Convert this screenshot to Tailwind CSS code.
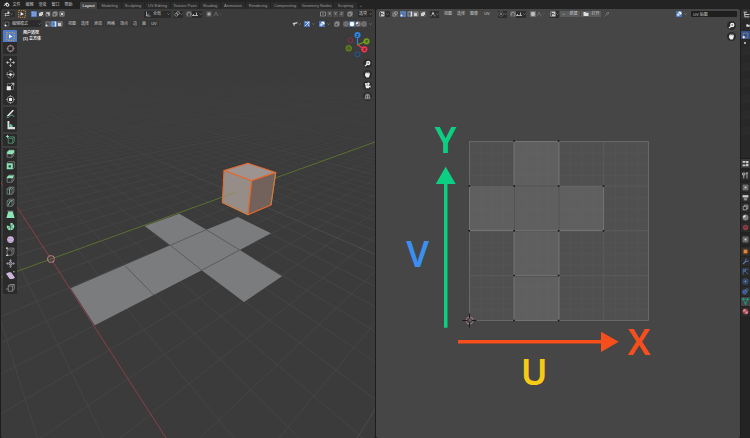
<!DOCTYPE html>
<html lang="zh-CN">
<head>
  <meta charset="utf-8">
  <title>UV Editor</title>
  <script src="https://cdn.jsdelivr.net/npm/@tailwindcss/browser@4"></script>
</head>
<body class="h-screen overflow-hidden flex flex-col bg-[#1d1d1d] text-[#c8c8c8] text-[4px] leading-none font-['Liberation_Sans','Noto_Sans_CJK_SC',sans-serif]">

  <!-- icon set -->
  <svg class="hidden">
    <defs>
      <symbol id="chev" viewBox="0 0 12 12"><path d="M2 4l4 4 4-4" fill="none" stroke="#aaa" stroke-width="2"/></symbol>
      <symbol id="logo" viewBox="0 0 18 12"><path d="M1 8.500l7-5H4V2h5.500L8.500.5l1.500-.4 5 4.200c3 2.800 2 7.200-3 7.200-3.500 0-5.200-2-5.200-4L4 9.500z" fill="#ddd"/><circle cx="11.500" cy="7" r="2" fill="#232323"/></symbol>
      <symbol id="editor" viewBox="0 0 12 12"><path d="M1 9h10M3 11V5M1 5h10M8 1v6" stroke="#bbb" stroke-width="1.500" fill="none"/><circle cx="9" cy="3" r="2" fill="#ddd"/></symbol>
      <symbol id="select" viewBox="0 0 12 12"><rect x="1" y="1" width="10" height="10" fill="none" stroke="#e8a33d" stroke-width="1.200" stroke-dasharray="2 1.300"/><path d="M4 3l5 3.500-3 .6L4 9z" fill="#fff"/></symbol>
      <symbol id="m1" viewBox="0 0 12 12"><rect x="2" y="2" width="8" height="8" fill="#6f93d8" stroke="#b9cdf3" stroke-dasharray="1.500 1"/></symbol>
      <symbol id="m2" viewBox="0 0 12 12"><path d="M2 4h3V2h5v6H8v2H2z" fill="#ccc"/></symbol>
      <symbol id="m3" viewBox="0 0 12 12"><path d="M2.500 2.500h7v7h-3v-4h-4z" fill="#ccc"/><path d="M2 6v4h4" fill="none" stroke="#999"/></symbol>
      <symbol id="m4" viewBox="0 0 12 12"><path d="M2 4h6v6H2zM4 4V2h6v6H8" fill="none" stroke="#bbb" stroke-width="1.200"/></symbol>
      <symbol id="m5" viewBox="0 0 12 12"><path d="M2 2h8v8H2z" fill="none" stroke="#aaa" stroke-width="1.200"/><path d="M4 4h4v4H4z" fill="#ccc"/></symbol>
      <symbol id="cursor" viewBox="0 0 12 12"><circle cx="6" cy="6" r="4" fill="none" stroke="#ccc" stroke-width="1"/><circle cx="6" cy="6" r="4" fill="none" stroke="#b0484e" stroke-width="1" stroke-dasharray="2 2"/><path d="M6 .5V4M6 8v3.500M.5 6H4M8 6h3.500" stroke="#888" stroke-width=".8"/></symbol>
      <symbol id="move" viewBox="0 0 12 12"><path d="M6 0l2 2.500H4zM6 12l2-2.500H4zM0 6l2.500-2v4zM12 6L9.500 4v4z" fill="#ccc"/><path d="M6 2v2.500M6 7.500V10M2 6h2.500M7.500 6H10" stroke="#ccc"/></symbol>
      <symbol id="rotate" viewBox="0 0 12 12"><circle cx="6" cy="6" r="4.700" fill="none" stroke="#aaa" stroke-width="1" stroke-dasharray="5 1.500"/><path d="M6 3.500L8.500 6 6 8.500 3.500 6z" fill="#ddd"/><path d="M1 6h3M8 6h3" stroke="#aaa"/></symbol>
      <symbol id="scale" viewBox="0 0 12 12"><path d="M2 2h8v8H2z" fill="none" stroke="#777"/><path d="M1 5.500h5.500V11H1z" fill="#eee"/><path d="M7 5l3-3M7.500 1.500h3v3" stroke="#ccc" fill="none"/></symbol>
      <symbol id="transform" viewBox="0 0 12 12"><circle cx="6" cy="6" r="4.500" fill="none" stroke="#999"/><path d="M4 4h4v4H4z" fill="#eee"/><path d="M6 0v3M6 9v3M0 6h3M9 6h3" stroke="#aaa"/></symbol>
      <symbol id="annotate" viewBox="0 0 12 12"><path d="M1.500 8.500L9 1l1.500 1L4 9l-3 1z" fill="#eee"/><path d="M1 11c4 1 4-3 7-3 2 0 1 2 3 2" fill="none" stroke="#5fb98a" stroke-width="1.200"/></symbol>
      <symbol id="measure" viewBox="0 0 12 12"><path d="M2 0h2.500v8H12v3H2z" fill="#ddd"/><path d="M5 4c3 0 4 2 4 4H5z" fill="#5fc797"/></symbol>
      <symbol id="cube" viewBox="0 0 12 12"><path d="M1.500 4h6.500v7H1.500zM1.500 4l2.500-2.500h6.500L8 4M10.500 1.500v6.500L8 11" fill="none" stroke="#888" stroke-width="1"/></symbol>
      <symbol id="addcube" viewBox="0 0 12 12"><path d="M3 4.500h6V11H3zM3 4.500l2-2h6l-2 2M11 2.500v6L9 11" fill="none" stroke="#559b79"/><path d="M0 2h4M2 0v4" stroke="#8fe0b8" stroke-width="1.200"/></symbol>
      <symbol id="extrude" viewBox="0 0 12 12"><use href="#cube"/><path d="M1.500 4.500L4 1.500h7v3L8.500 7h-7z" fill="#8ce3b6"/></symbol>
      <symbol id="inset" viewBox="0 0 12 12"><path d="M1 3h8v8H1z" fill="#8ce3b6"/><path d="M3.500 5.500h3v3h-3z" fill="#2c3a33"/><path d="M1 3l2-2h8v8l-2 2" fill="none" stroke="#888"/></symbol>
      <symbol id="bevel" viewBox="0 0 12 12"><use href="#cube"/><path d="M1 5L3.500 2h7L9 5.500H1z" fill="#8ce3b6"/></symbol>
      <symbol id="loop" viewBox="0 0 12 12"><use href="#cube"/><path d="M4.800 11V4L7 1.500" fill="none" stroke="#6ccb9c" stroke-width="1.200"/></symbol>
      <symbol id="knife" viewBox="0 0 12 12"><use href="#cube"/><path d="M3 10l2-5 3-2" fill="none" stroke="#6ccb9c" stroke-width="1.200"/></symbol>
      <symbol id="poly" viewBox="0 0 12 12"><path d="M3 2h6l2.500 8.500H.5z" fill="#8ce3b6"/><path d="M2 1.500h8" stroke="#ccc" stroke-dasharray="1.500 1"/></symbol>
      <symbol id="spin" viewBox="0 0 12 12"><path d="M6 6V1A5 5 0 1 1 1.300 4.500z" fill="#8ce3b6"/><path d="M6 6l4-3M6 6l4 3M6 6v5M6 6l-4 2.500" stroke="#2c3a33" stroke-width=".7"/></symbol>
      <symbol id="smooth" viewBox="0 0 12 12"><circle cx="6" cy="6" r="4.500" fill="#cdb5dc"/><path d="M1.500 7.500c3 1.500 6 1.500 9 0M1.500 4.500c3 1.200 6 1.200 9 0" stroke="#8d789b" fill="none" stroke-width=".6"/></symbol>
      <symbol id="slide" viewBox="0 0 12 12"><use href="#cube"/><path d="M0 1.500h2.500M0 11h3" stroke="#eee" stroke-width="1.500"/></symbol>
      <symbol id="shrink" viewBox="0 0 12 12"><path d="M6 0l2 2.500H4zM6 12l2-2.500H4zM0 6l2.500-2v4zM12 6L9.500 4v4z" fill="#999"/><path d="M6 3l3 3-3 3-3-3z" fill="#75697d" stroke="#d0bfdb"/></symbol>
      <symbol id="shear" viewBox="0 0 12 12"><path d="M0 3.500C3 2 5 1.500 7 2l5 7c-3 2-5 2-7 1.500z" fill="#cdb5dc"/><path d="M9.500 1h2" stroke="#eee"/></symbol>
      <symbol id="rip" viewBox="0 0 12 12"><path d="M3 4h5.500v7H3zM3 4l2-2h6L8.500 4M11 2v6l-2.500 3M0 8h3" fill="none" stroke="#999"/></symbol>
      <symbol id="magnet" viewBox="0 0 12 12"><path d="M3 9A4 4 0 1 1 9 9" fill="none" stroke="#999" stroke-width="2"/></symbol>
      <symbol id="snapto" viewBox="0 0 12 12"><path d="M0 9h12M3 9V6M9 9V3" stroke="#ccc" stroke-width="1.600"/></symbol>
      <symbol id="dot" viewBox="0 0 12 12"><circle cx="6" cy="6" r="4" fill="#888"/><circle cx="6" cy="6" r="1.500" fill="#ccc"/></symbol>
      <symbol id="disc" viewBox="0 0 12 12"><circle cx="6" cy="6" r="4.500" fill="#bbb"/></symbol>
      <symbol id="curve" viewBox="0 0 12 12"><path d="M1 10c4 0 3-8 5-8s1 8 5 8" fill="none" stroke="#888" stroke-width="1.200"/></symbol>
      <symbol id="axes" viewBox="0 0 12 12"><path d="M3 1v9h8M3 10l5-5" fill="none" stroke="#ccc" stroke-width="1.300"/></symbol>
      <symbol id="link" viewBox="0 0 12 12"><circle cx="4.500" cy="7.500" r="3" fill="none" stroke="#aaa" stroke-width="1.300"/><circle cx="8" cy="4" r="3" fill="none" stroke="#aaa" stroke-width="1.300"/></symbol>
      <symbol id="mirror" viewBox="0 0 12 12"><path d="M4 2H1v8h3M8 2h3v8H8M6 0v12" fill="none" stroke="#aaa" stroke-width="1.300"/></symbol>
      <symbol id="vert" viewBox="0 0 12 12"><path d="M2 2h8v8H2z" fill="none" stroke="#999"/><circle cx="3" cy="9" r="2" fill="#eee"/></symbol>
      <symbol id="edge" viewBox="0 0 12 12"><path d="M2 2h8v8H2z" fill="none" stroke="#a9c0ee"/><path d="M8.500 1v10" stroke="#fff" stroke-width="2"/></symbol>
      <symbol id="face" viewBox="0 0 12 12"><path d="M2 2h8v8H2z" fill="none" stroke="#aaa"/><path d="M2 4h6v6H2z" fill="#ccc"/></symbol>
      <symbol id="overlay" viewBox="0 0 12 12"><circle cx="7.500" cy="4.500" r="3.500" fill="#fff"/><circle cx="4.500" cy="7.500" r="3.500" fill="#c3d4f5" stroke="#4772b3"/></symbol>
      <symbol id="gizmo" viewBox="0 0 12 12"><path d="M2 2c5 1 7 4 8 8M2 10l8-8M7 2h3v3" fill="none" stroke="#fff" stroke-width="1.300"/></symbol>
      <symbol id="eye" viewBox="0 0 12 12"><path d="M1 5q3-3 7-2l3-2-1 4-4 1-2 5-1-4z" fill="#ccc"/></symbol>
      <symbol id="sticky" viewBox="0 0 12 12"><path d="M6 1l3 6H3z" fill="#ccc"/><path d="M1 9.500h3M8 9.500h3" stroke="#aaa" stroke-width="1.500"/></symbol>
      <symbol id="pivot" viewBox="0 0 12 12"><circle cx="6" cy="6" r="4.700" fill="none" stroke="#aaa" stroke-dasharray="3 1.500"/><circle cx="6" cy="6" r="1.500" fill="#ddd"/></symbol>
      <symbol id="sphere" viewBox="0 0 12 12"><circle cx="6" cy="6" r="4.500" fill="none" stroke="#aaa"/><path d="M6 1.500v9M1.500 6h9" stroke="#aaa" stroke-width=".8"/></symbol>
      <symbol id="solid" viewBox="0 0 12 12"><circle cx="6" cy="6" r="4.500" fill="#fff"/></symbol>
      <symbol id="shade" viewBox="0 0 12 12"><circle cx="6" cy="6" r="4.500" fill="#777" stroke="#aaa"/><path d="M6 1.500A4.500 4.500 0 0 0 1.500 6H6z" fill="#ddd"/></symbol>
      <symbol id="image" viewBox="0 0 12 12"><path d="M1 1h10v10H1z" fill="#ccc"/><path d="M3 2v8M3 8l3-4 3 4" stroke="#333" fill="none" stroke-width="1.500"/></symbol>
      <symbol id="folder" viewBox="0 0 12 12"><path d="M1 2h4l1 1.500h5V10H1z" fill="#ddd"/></symbol>
      <symbol id="pin" viewBox="0 0 12 12"><path d="M1 11l4-4M4 4l4 4M5 5l3-3 2 2-3 3" fill="none" stroke="#888" stroke-width="1.300"/></symbol>
      <symbol id="zoomi" viewBox="0 0 12 12"><circle cx="6" cy="6" r="6" fill="#2b2b2b"/><circle cx="7" cy="5.300" r="2.900" fill="#eee"/><path d="M2.500 9.500l3-2.500" stroke="#eee" stroke-width="1.600"/><path d="M5.700 5.300h2.600M7 4v2.600" stroke="#444" stroke-width=".6"/></symbol>
      <symbol id="hand" viewBox="0 0 12 12"><circle cx="6" cy="6" r="6" fill="#2b2b2b"/><path d="M3 5l1-2 .5 2L5 2l1 2.500L7 2l.5 3L9 3v4l-1.500 3h-3L2.500 7z" fill="#eee"/></symbol>
      <symbol id="camera" viewBox="0 0 12 12"><circle cx="6" cy="6" r="6" fill="#2b2b2b"/><circle cx="4" cy="4" r="1.500" fill="#eee"/><circle cx="7.200" cy="3.800" r="1.700" fill="#eee"/><path d="M3 5.500h5v1l2-1v3.500l-2-1v1.500H4z" fill="#eee"/></symbol>
      <symbol id="persp" viewBox="0 0 12 12"><circle cx="6" cy="6" r="6" fill="#2b2b2b"/><path d="M4 3h4l1.500 6h-7zM3.500 5h5M3 7h6M6 3v6" fill="none" stroke="#bbb" stroke-width=".8"/></symbol>
      <symbol id="wrench" viewBox="0 0 12 12"><path d="M2 10l5-5" stroke="#5e86c9" stroke-width="2"/><path d="M7 1L6.500 4.500 8 6l3.500-1" fill="none" stroke="#5e86c9" stroke-width="1.500"/></symbol>
      <symbol id="tree" viewBox="0 0 12 12"><path d="M1 2h6M3 2v8M3 6h8M3 10h8" fill="none" stroke="#ccc" stroke-width="1.600"/></symbol>
      <symbol id="props" viewBox="0 0 12 12"><path d="M1 1.500h5v3H1zM1 7.500h5v3H1zM7 1.500h4v4H7zM7 7h4v3.500H7z" fill="#ccc"/></symbol>
      <symbol id="tools" viewBox="0 0 12 12"><path d="M3 5v6M1 2h4v3H1zM8.500 1v10M6.500 2h4" stroke="#bbb" stroke-width="1.500" fill="none"/></symbol>
      <symbol id="printer" viewBox="0 0 12 12"><path d="M1 2h10v4H1z" fill="#ccc"/><path d="M3 7h6v4H3z" fill="#888"/></symbol>
    </defs>
  </svg>

  <!-- top bar -->
  <header class="h-[9px] shrink-0 bg-[#232323] flex items-center pl-[3px]">
    <svg class="w-[7px] h-[5px]"><use href="#logo"/></svg>
    <nav class="flex mr-px" aria-label="菜单">
      <button class="w-[13px] text-center">文件</button>
      <button class="w-[13px] text-center">编辑</button>
      <button class="w-[13px] text-center">渲染</button>
      <button class="w-[13px] text-center">窗口</button>
      <button class="w-[13px] text-center">帮助</button>
    </nav>
    <nav class="flex self-end items-center gap-px ml-[4px] text-[#9a9a9a] *:h-[7px] *:bg-[#2b2b2b] *:rounded-t-[1px]" aria-label="工作区">
      <button class="w-[17px] bg-[#424242]! text-white">Layout</button>
      <button class="w-[23px]">Modeling</button>
      <button class="w-[22px]">Sculpting</button>
      <button class="w-[25px]">UV Editing</button>
      <button class="w-[28px]">Texture Paint</button>
      <button class="w-[20px]">Shading</button>
      <button class="w-[24px]">Animation</button>
      <button class="w-[24px]">Rendering</button>
      <button class="w-[28px]">Compositing</button>
      <button class="w-[33px]">Geometry Nodes</button>
      <button class="w-[23px]">Scripting</button>
      <button class="w-[6px] bg-transparent!">+</button>
    </nav>
  </header>

  <main class="flex-1 min-h-0 flex gap-px pl-px">

    <!-- 3D viewport -->
    <section class="flex-[374] min-w-0 flex flex-col bg-[#3b3b3b] rounded-[2px] overflow-hidden">
      <div class="h-[10px] shrink-0 flex items-center px-[3px] [&_svg]:w-[6px] [&_svg]:h-[6px]">
        <button class="flex items-center w-[11px] bg-[#2e2e2e] rounded-[1px]" aria-label="编辑器类型"><svg><use href="#editor"/></svg><svg class="w-[3px]!"><use href="#chev"/></svg></button>
        <button class="ml-[3px]" aria-label="框选"><svg class="w-[8px]! h-[8px]!"><use href="#select"/></svg></button>
        <div class="ml-[5px] flex gap-px *:bg-[#4c4c4c]">
          <button class="bg-[#4772b3]!" aria-label="新建选区"><svg><use href="#m1"/></svg></button>
          <button aria-label="扩展"><svg><use href="#m2"/></svg></button>
          <button aria-label="减去"><svg><use href="#m3"/></svg></button>
          <button aria-label="反转"><svg><use href="#m4"/></svg></button>
          <button aria-label="相交"><svg><use href="#m5"/></svg></button>
        </div>
        <button class="ml-[79px] w-[27px] h-[7px] px-px flex items-center gap-[2px] bg-[#2b2b2b] rounded-[1px]"><svg><use href="#axes"/></svg>全局<svg class="w-[3px]! ml-auto"><use href="#chev"/></svg></button>
        <button class="ml-[3px] h-[7px] flex items-center bg-[#2b2b2b]" aria-label="轴心点"><svg><use href="#link"/></svg><svg class="w-[3px]!"><use href="#chev"/></svg></button>
        <button class="ml-[3px] bg-[#4c4c4c]" aria-label="吸附"><svg><use href="#magnet"/></svg></button>
        <button class="h-[7px] flex items-center gap-px bg-[#2b2b2b]" aria-label="吸附至"><svg><use href="#snapto"/></svg><svg class="w-[3px]!"><use href="#chev"/></svg></button>
        <button class="ml-[4px] bg-[#4c4c4c]" aria-label="衰减编辑"><svg><use href="#dot"/></svg></button>
        <button class="ml-px h-[7px] flex items-center" aria-label="衰减"><svg><use href="#curve"/></svg><svg class="w-[3px]! opacity-40"><use href="#chev"/></svg></button>
        <div class="ml-auto flex items-center gap-px text-center *:h-[6px]">
          <svg><use href="#mirror"/></svg>
          <button class="w-[5px] bg-[#4c4c4c]">X</button>
          <button class="w-[5px] bg-[#4c4c4c]">Y</button>
          <button class="w-[5px] bg-[#4c4c4c]">Z</button>
          <button class="ml-[2px] bg-[#4c4c4c]" aria-label="自动合并"><svg><use href="#m4"/></svg></button>
          <button class="ml-[4px] w-[14px] flex items-center justify-between pl-px bg-[#2b2b2b]">选项<svg class="w-[3px]!"><use href="#chev"/></svg></button>
        </div>
      </div>
      <div class="h-[9px] shrink-0 flex items-center px-[3px] [&_svg]:w-[6px] [&_svg]:h-[6px]">
        <button class="w-[37px] h-[7px] flex items-center gap-[2px] bg-[#2b2b2b] rounded-[1px]"><svg><use href="#vert"/></svg>编辑模式<svg class="w-[3px]! ml-auto"><use href="#chev"/></svg></button>
        <div class="ml-[4px] flex *:bg-[#4c4c4c] *:h-[6px]">
          <button aria-label="顶点选择"><svg><use href="#vert"/></svg></button>
          <button class="bg-[#4772b3]!" aria-label="边选择"><svg><use href="#edge"/></svg></button>
          <button aria-label="面选择"><svg><use href="#face"/></svg></button>
        </div>
        <nav class="ml-[3px] flex gap-px *:h-[7px] *:bg-[#363636] *:rounded-[1px]" aria-label="视图菜单">
          <button class="w-[12px]">视图</button>
          <button class="w-[12px]">选择</button>
          <button class="w-[12px]">添加</button>
          <button class="w-[12px]">网格</button>
          <button class="w-[12px]">顶点</button>
          <button class="w-[8px]">边</button>
          <button class="w-[8px]">面</button>
          <button class="w-[10px]">UV</button>
        </nav>
        <div class="ml-auto flex items-center *:h-[6px]">
          <button class="flex items-center mr-[3px]" aria-label="可见性"><svg><use href="#eye"/></svg><svg class="w-[3px]!"><use href="#chev"/></svg></button>
          <button class="bg-[#4772b3]" aria-label="Gizmo"><svg><use href="#gizmo"/></svg></button>
          <svg class="w-[3px]! ml-[2px] mr-[4px]"><use href="#chev"/></svg>
          <button class="bg-[#4772b3]" aria-label="叠加层"><svg><use href="#overlay"/></svg></button>
          <svg class="w-[3px]! ml-[2px] mr-[4px]"><use href="#chev"/></svg>
          <button class="bg-[#4c4c4c] mr-[3px]" aria-label="透视模式"><svg><use href="#m4"/></svg></button>
          <button class="bg-[#4c4c4c]" aria-label="线框"><svg><use href="#sphere"/></svg></button>
          <button class="bg-[#4772b3]" aria-label="实体"><svg><use href="#solid"/></svg></button>
          <button class="bg-[#4c4c4c]" aria-label="材质预览"><svg><use href="#shade"/></svg></button>
          <button class="bg-[#4c4c4c] mr-[2px]" aria-label="渲染预览"><svg><use href="#sphere"/></svg></button>
          <svg class="w-[3px]!"><use href="#chev"/></svg>
        </div>
      </div>

      <div class="relative flex-1 min-h-0">
        <svg class="absolute inset-0 w-full h-full" viewBox="1 28 374 410" preserveAspectRatio="xMidYMid slice">
          <defs>
            <linearGradient id="fade" gradientUnits="userSpaceOnUse" x1="0" y1="66" x2="0" y2="250">
              <stop offset="0" stop-color="#000"/>
              <stop offset=".3" stop-color="#444"/>
              <stop offset="1" stop-color="#fff"/>
            </linearGradient>
            <mask id="haze" maskUnits="userSpaceOnUse" x="0" y="0" width="380" height="440"><path d="M0 0h380v440H0z" fill="url(#fade)"/></mask>
          </defs>
          <g id="floor" mask="url(#haze)" fill="none"></g>
          <path d="M0 181L51 259 166 438" fill="none" stroke="#93404a" stroke-width=".9"/>
          <path d="M0 277.500L51 259 375 142" fill="none" stroke="#5d7530" stroke-width=".9"/>
          <path d="M70.700 288.300L170.300 245.300 144.700 226 179.300 213.700 206.300 229.700 238 217 271 233.300 239.700 250 282 276.300 244 302 201.700 270.300 94.700 325.300z" fill="#7b7c7e"/>
          <path d="M125 265.700L153.700 295M170.300 245.300L201.700 270.300 239.700 250 206.300 229.700z" fill="none" stroke="#58595b" stroke-width=".9"/>
          <g stroke="#e8682c" stroke-width="1.100" stroke-linejoin="round">
            <path d="M224 170.500L248 163.300 275.700 172.500 251.700 180.700z" fill="#9d9491"/>
            <path d="M224 170.500L251.700 180.700 248 214.700 222.300 202.500z" fill="#968c88"/>
            <path d="M275.700 172.500L251.700 180.700 248 214.700 271 205z" fill="#72625b"/>
          </g>
          <path d="M275.700 172.500L271 205M222.300 202.500L248 214.700" stroke="#b98a4c" stroke-width=".8"/>
          <path d="M222.300 197.500L236 192" stroke="#8d8b4f" stroke-width=".8"/>
          <circle cx="248" cy="188" r="1" fill="#d9762f"/>
          <circle cx="51" cy="259" r="3.500" fill="none" stroke="#bbb" stroke-width=".8"/>
          <circle cx="51" cy="259" r="3.500" fill="none" stroke="#b5373d" stroke-width=".9" stroke-dasharray="2 2"/>
        </svg>

        <p class="absolute left-[22px] top-[2px] leading-[6px] text-[#eee] font-bold">用户透视<br>(1) 立方体</p>

        <div class="absolute left-[2px] top-[2px] w-[14px] h-[264px] flex flex-col gap-[2px] *:bg-[#2b2b2b] *:flex *:flex-col *:rounded-[1px] *:overflow-hidden [&_button]:flex-1 [&_button]:flex [&_button]:items-center [&_button]:justify-center [&_svg]:w-[9px] [&_svg]:h-[9px]" role="toolbar" aria-label="工具">
          <div class="flex-[2]">
            <button class="bg-[#4f7cc9]" aria-label="框选"><svg><use href="#select"/></svg></button>
            <button aria-label="游标"><svg><use href="#cursor"/></svg></button>
          </div>
          <div class="flex-[4]">
            <button aria-label="移动"><svg><use href="#move"/></svg></button>
            <button aria-label="旋转"><svg><use href="#rotate"/></svg></button>
            <button aria-label="缩放"><svg><use href="#scale"/></svg></button>
            <button aria-label="变换"><svg><use href="#transform"/></svg></button>
          </div>
          <div class="flex-[2]">
            <button aria-label="标注"><svg><use href="#annotate"/></svg></button>
            <button aria-label="测量"><svg><use href="#measure"/></svg></button>
          </div>
          <div class="flex-1">
            <button aria-label="添加立方体"><svg><use href="#addcube"/></svg></button>
          </div>
          <div class="flex-[12]">
            <button aria-label="挤出选区"><svg><use href="#extrude"/></svg></button>
            <button aria-label="内插面"><svg><use href="#inset"/></svg></button>
            <button aria-label="倒角"><svg><use href="#bevel"/></svg></button>
            <button aria-label="环切"><svg><use href="#loop"/></svg></button>
            <button aria-label="切割"><svg><use href="#knife"/></svg></button>
            <button aria-label="多边形建形"><svg><use href="#poly"/></svg></button>
            <button aria-label="旋绕"><svg><use href="#spin"/></svg></button>
            <button aria-label="光滑"><svg><use href="#smooth"/></svg></button>
            <button aria-label="滑移边线"><svg><use href="#slide"/></svg></button>
            <button aria-label="法向缩放"><svg><use href="#shrink"/></svg></button>
            <button aria-label="切变"><svg><use href="#shear"/></svg></button>
            <button aria-label="断离区域"><svg><use href="#rip"/></svg></button>
          </div>
        </div>

        <!-- navigation gizmo -->
        <svg class="absolute right-[3px] top-[2px] w-[28px] h-[30px]" viewBox="344 30 28 30">
          <path d="M357.500 44.700V35" stroke="#2f83e3" stroke-width="1.100"/>
          <path d="M357.500 44.700L366.500 41.300" stroke="#6f9d1c" stroke-width="1.100"/>
          <path d="M357.500 44.700L364.300 49.300" stroke="#f23550" stroke-width="1.100"/>
          <circle cx="350.500" cy="40.300" r="2.500" fill="#4b343a" stroke="#8c3444" stroke-width=".8"/>
          <circle cx="348.700" cy="48.300" r="2.800" fill="#4d6321" stroke="#6f9d1c" stroke-width=".8"/>
          <circle cx="357.500" cy="54.300" r="2.500" fill="#2f3e50" stroke="#2b5f97" stroke-width=".8"/>
          <g font-size="4" font-weight="700" text-anchor="middle" fill="#1c1c1c">
            <circle cx="357.500" cy="35" r="3.100" fill="#2f83e3"/><text x="357.500" y="36.500">Z</text>
            <circle cx="366.500" cy="41.300" r="3.100" fill="#6f9d1c"/><text x="366.500" y="42.800">Y</text>
            <circle cx="364.300" cy="49.300" r="3.100" fill="#f23550"/><text x="364.300" y="50.800">X</text>
          </g>
        </svg>
        <div class="absolute right-[3px] top-[31px] flex flex-col gap-[2px] [&_svg]:w-[9px] [&_svg]:h-[9px]">
          <button aria-label="缩放视图"><svg><use href="#zoomi"/></svg></button>
          <button aria-label="移动视图"><svg><use href="#hand"/></svg></button>
          <button aria-label="摄像机视图"><svg><use href="#camera"/></svg></button>
          <button aria-label="透视/正交"><svg><use href="#persp"/></svg></button>
        </div>
      </div>
    </section>

    <!-- UV editor -->
    <section class="flex-[364] min-w-0 flex flex-col bg-[#464646] rounded-[2px] overflow-hidden">
      <div class="h-[10px] shrink-0 flex items-center px-[3px] [&_svg]:w-[6px] [&_svg]:h-[6px]">
        <button class="flex items-center w-[11px] bg-[#2e2e2e]" aria-label="编辑器类型"><svg><use href="#image"/></svg><svg class="w-[3px]! ml-px"><use href="#chev"/></svg></button>
        <button class="ml-[2px] bg-[#5a5a5a]" aria-label="同步选择"><svg><use href="#link"/></svg></button>
        <div class="ml-[2px] flex *:bg-[#5a5a5a]">
          <button class="bg-[#4772b3]! mr-px" aria-label="顶点"><svg><use href="#vert"/></svg></button>
          <button aria-label="边"><svg><use href="#edge"/></svg></button>
          <button class="mr-px" aria-label="面"><svg><use href="#face"/></svg></button>
          <button aria-label="孤岛"><svg><use href="#m2"/></svg></button>
        </div>
        <button class="ml-[4px] h-[7px] flex items-center bg-[#2e2e2e]" aria-label="粘滞选择"><svg><use href="#sticky"/></svg><svg class="w-[3px]!"><use href="#chev"/></svg></button>
        <nav class="ml-[3px] flex gap-px" aria-label="UV 菜单">
          <button class="w-[12px]">视图</button>
          <button class="w-[12px]">选择</button>
          <button class="w-[12px]">图像</button>
          <button class="w-[12px]">UV</button>
        </nav>
        <button class="ml-[5px] h-[7px] flex items-center bg-[#2e2e2e]" aria-label="轴心点"><svg><use href="#pivot"/></svg><svg class="w-[3px]!"><use href="#chev"/></svg></button>
        <button class="ml-[3px] bg-[#5a5a5a]" aria-label="吸附"><svg><use href="#magnet"/></svg></button>
        <button class="h-[7px] flex items-center bg-[#2e2e2e]" aria-label="吸附至"><svg><use href="#snapto"/></svg><svg class="w-[3px]! ml-px"><use href="#chev"/></svg></button>
        <button class="ml-[4px] bg-[#6a6a6a]" aria-label="衰减编辑"><svg><use href="#disc"/></svg></button>
        <button class="h-[7px] flex items-center" aria-label="衰减"><svg><use href="#curve"/></svg><svg class="w-[3px]! opacity-40"><use href="#chev"/></svg></button>
        <button class="ml-[5px] h-[7px] flex items-center bg-[#2e2e2e]" aria-label="浏览图像"><svg><use href="#image"/></svg><svg class="w-[3px]!"><use href="#chev"/></svg></button>
        <button class="ml-px w-[20px] h-[6px] flex items-center justify-around bg-[#5a5a5a]"><span>+</span>新建</button>
        <button class="ml-px w-[20px] h-[6px] flex items-center justify-around bg-[#5a5a5a]"><svg><use href="#folder"/></svg>打开</button>
        <button class="ml-[3px]" aria-label="钉固"><svg><use href="#pin"/></svg></button>
        <button class="ml-auto bg-[#4772b3]" aria-label="叠加层"><svg><use href="#overlay"/></svg></button>
        <svg class="w-[3px]! ml-[2px]"><use href="#chev"/></svg>
        <input class="ml-[4px] w-[46px] h-[6px] px-[2px] bg-[#1f1f1f] rounded-[1px]" type="text" value="UV 贴图" aria-label="UV 贴图">
      </div>

      <div class="relative flex-1 min-h-0">
        <svg class="absolute inset-0 w-full h-full" viewBox="376 19 364 419" preserveAspectRatio="xMidYMid slice">
          <defs>
            <pattern id="sub" patternUnits="userSpaceOnUse" x="469.300" y="141.300" width="11.200" height="11.200"><path d="M0 .5h11.200M.5 0v11.200" stroke="#555" stroke-width=".7"/></pattern>
          </defs>
          <path d="M469.500 141.500h179v179h-179z" fill="#505050"/>
          <path d="M469.500 141.500h179v179h-179z" fill="url(#sub)"/>
          <path d="M514.500 141.500v179M559 141.500v179M603.500 141.500v179M469.500 186h179M469.500 230.500h179M469.500 275.500h179" stroke="#5a5a5a" stroke-width=".9"/>
          <path d="M469.500 141.500h179v179h-179z" fill="none" stroke="#686868"/>
          <path d="M514 141.500h45v44.500h44.500v45H559v89.500h-45V231h-44.500v-45H514z" fill="#808080" fill-opacity=".32"/>
          <path d="M514 186V141.500h45V186M514 231v89.500h45V231M559 186h44.500v45H559M514 231h-44.500v-45" fill="none" stroke="#747474" stroke-width=".9"/>
          <path d="M514.500 186h44.500v45h-44.500zM469.500 231.300h45M559 231.300h44.500M469.500 185.700h45M559 185.700h44.500M514.500 276.300H559" fill="none" stroke="#4e4e4e" stroke-width=".8"/>
          <path d="M469.500 230.400h134M514.500 275.400H559" stroke="#7c7c7c" stroke-width=".6"/>
          <path d="M513.300 141h1.600M557.800 141h1.600M468.500 186h1.600M513.300 186h1.600M557.800 186h1.600M602.700 186h1.600M468.500 230.700h1.600M513.300 230.700h1.600M557.800 230.700h1.600M602.700 230.700h1.600M513.300 275.500h1.600M557.800 275.500h1.600M513.300 320.500h1.600M557.800 320.500h1.600" stroke="#111" stroke-width="1.500"/>
          <circle cx="469.500" cy="320.500" r="3.500" fill="none" stroke="#b5a5a5" stroke-width=".8"/>
          <circle cx="469.500" cy="320.500" r="3.500" fill="none" stroke="#8f3a40" stroke-width=".9" stroke-dasharray="2 2"/>
          <path d="M469.500 313.500v5M469.500 322.500v5M462.500 320.500h5M471.500 320.500h5" stroke="#1c1c1c"/>
          <path d="M444 327.700V184h-8.300L445.700 166.700 455.700 184H447.500v143.700z" fill="#0ccf83"/>
          <path d="M458 340h143v-8.300L618.700 341.700 601 352v-8.500H458z" fill="#f64f1c"/>
          <g font-family="Noto Sans, sans-serif" font-size="36" font-weight="600" text-anchor="middle">
            <text x="445.700" y="152.500" fill="#0ccf83">Y</text>
            <text x="417.500" y="266.700" fill="#3b8ff0">V</text>
            <text x="639" y="354.500" fill="#f64f1c">X</text>
            <text x="534.300" y="384.700" fill="#f7cb15">U</text>
          </g>
        </svg>
        <div class="absolute right-[4px] top-[2px] flex flex-col gap-[2px] [&_svg]:w-[9px] [&_svg]:h-[9px]">
          <button aria-label="缩放视图"><svg><use href="#zoomi"/></svg></button>
          <button aria-label="移动视图"><svg><use href="#hand"/></svg></button>
        </div>
      </div>
    </section>

    <!-- outliner and properties, mostly off screen -->
    <aside class="w-[9px] shrink-0 flex flex-col gap-px [&_svg]:w-[7px] [&_svg]:h-[7px]">
      <div class="h-[149px] bg-[#282828] overflow-hidden rounded-tl-[2px]">
        <div class="h-[10px] bg-[#303030] flex items-center justify-end"><svg><use href="#tree"/></svg></div>
        <div class="h-[12px] flex items-center justify-end"><svg class="w-[4px]!"><use href="#folder"/></svg></div>
        <div class="h-[8px] bg-[#355089] flex items-center justify-center"><svg><use href="#vert"/></svg></div>
        <div class="h-[8px] flex items-center pl-[3px]"><span class="w-[2px] h-[2px] bg-[#aaa]"></span></div>
        <div class="h-[8px] bg-[#2b2b2b]"></div><div class="h-[8px]"></div>
        <div class="h-[8px] bg-[#2b2b2b]"></div><div class="h-[8px]"></div>
        <div class="h-[8px] bg-[#2b2b2b]"></div><div class="h-[8px]"></div>
        <div class="h-[8px] bg-[#2b2b2b]"></div><div class="h-[8px]"></div>
        <div class="h-[8px] bg-[#2b2b2b]"></div><div class="h-[8px]"></div>
        <div class="h-[8px] bg-[#2b2b2b]"></div><div class="h-[8px]"></div>
      </div>
      <div class="flex-1 bg-[#232323] flex flex-col items-center [&_button]:h-[9px] [&_button]:mb-px [&_button]:w-full [&_button]:bg-[#2b2b2b] [&_button]:flex [&_button]:items-center [&_button]:justify-center">
        <button class="bg-[#3a3a3a]!" aria-label="属性编辑器"><svg><use href="#props"/></svg></button>
        <button class="mt-[2px]" aria-label="工具"><svg><use href="#tools"/></svg></button>
        <button class="mt-[2px]" aria-label="渲染"><svg><use href="#m5"/></svg></button>
        <button aria-label="输出"><svg><use href="#printer"/></svg></button>
        <button aria-label="视图层"><svg><use href="#m4"/></svg></button>
        <button aria-label="场景"><svg><use href="#shade"/></svg></button>
        <button aria-label="世界环境"><svg viewBox="0 0 12 12"><circle cx="6" cy="6" r="4" fill="#8c3a42" stroke="#b8505a"/><path d="M3 6l3-2 3 3" stroke="#3a2224" fill="none"/></svg></button>
        <button class="mt-[2px]" aria-label="集合"><svg><use href="#m5"/></svg></button>
        <button class="mt-[2px]" aria-label="物体"><svg viewBox="0 0 12 12"><path d="M1 1h10v10H1z" fill="#5b3d22"/><path d="M3 3h6v6H3z" fill="#e0883b"/></svg></button>
        <button aria-label="修改器"><svg><use href="#wrench"/></svg></button>
        <button aria-label="粒子"><svg viewBox="0 0 12 12"><path d="M2 11V2h9M2 2l8 8M6 2v3M2 6h3" fill="none" stroke="#4f78b8" stroke-width="1.300"/></svg></button>
        <button aria-label="物理"><svg viewBox="0 0 12 12"><circle cx="6" cy="6" r="4.500" fill="none" stroke="#4470b3" stroke-width="1.300"/><circle cx="6" cy="6" r="2" fill="#6b95d9"/></svg></button>
        <button aria-label="约束"><svg viewBox="0 0 12 12"><circle cx="4.500" cy="7" r="3.500" fill="#35598f" stroke="#5e86c9"/><circle cx="8.500" cy="3.500" r="2.300" fill="none" stroke="#5e86c9"/></svg></button>
        <button class="bg-[#454545]!" aria-label="数据"><svg viewBox="0 0 12 12"><path d="M2 2h8L6 10z" fill="none" stroke="#14b08b" stroke-width="1.300"/><circle cx="2" cy="2" r="1.500" fill="#14b08b"/><circle cx="10" cy="2" r="1.500" fill="#14b08b"/><circle cx="6" cy="10" r="1.500" fill="#14b08b"/></svg></button>
        <button aria-label="材质"><svg viewBox="0 0 12 12"><circle cx="6" cy="6" r="4.700" fill="#a8434f"/><path d="M6 6h4.700A4.700 4.700 0 0 1 6 10.700zM6 6H1.300A4.700 4.700 0 0 1 6 1.300z" fill="#d98a92"/></svg></button>
      </div>
    </aside>
  </main>

  <script>
    // floor plane -> screen
    const depth = (x, y) => 1 - 0.1233 * x + 0.1051 * y;
    const project = (x, y) => {
      const w = depth(x, y);
      return ((10.18 * x + 61.6 * y + 51) / w).toFixed(1) + ' ' + ((-6.95 * x + 7.353 * y + 259) / w).toFixed(1);
    };

    const step = 0.5, far = 120, near = 0.15;
    let minor = '', major = '';
    for (let i = -90; i <= 90; i++) {
      if (i === 0) continue;
      const k = i * step;
      let d = '';
      // line along x
      const xMax = (1 - near + 0.1051 * k) / 0.1233;
      if (xMax > -far) d += 'M' + project(-far, k) + 'L' + project(xMax, k);
      // line along y
      const yMin = (0.1233 * k - 1 + near) / 0.1051;
      if (yMin < far) d += 'M' + project(k, yMin) + 'L' + project(k, far);
      if (i % 10 === 0) major += d; else minor += d;
    }
    document.getElementById('floor').innerHTML =
      `<path d="${minor}" stroke="#484848" stroke-width=".8"/><path d="${major}" stroke="#525252" stroke-width=".8"/>`;
  </script>
</body>
</html>
